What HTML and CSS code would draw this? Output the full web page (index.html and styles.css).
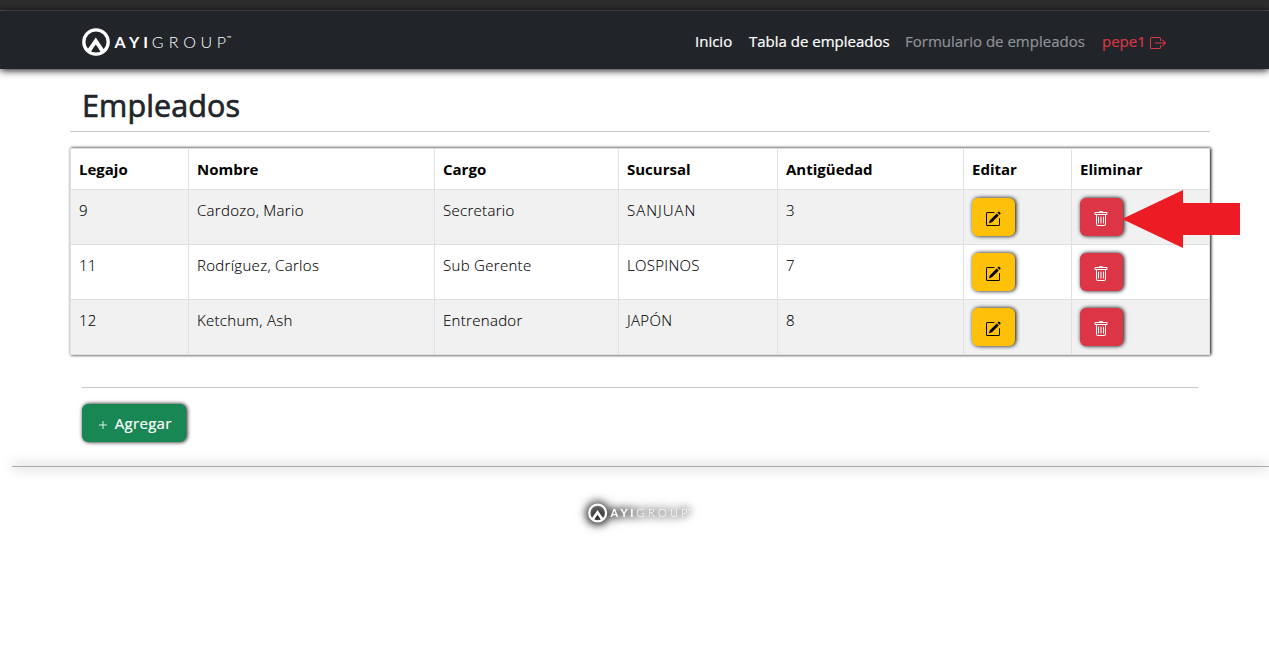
FILE: index.html
```html
<!DOCTYPE html>
<html lang="es">
<head>
<meta charset="utf-8">
<title>Empleados</title>
<link rel="stylesheet" href="styles.css">
</head>
<body>
<svg class="defs" width="0" height="0">
  <symbol id="edit" viewBox="0 0 16 16">
    <path d="M15.502 1.940a.5.5 0 0 1 0 .706L14.459 3.690l-2-2L13.502.646a.5.5 0 0 1 .707 0l1.293 1.293zm-1.750 2.456-2-2L4.939 9.210a.5.5 0 0 0-.121.196l-.805 2.414a.25.25 0 0 0 .316.316l2.414-.805a.5.5 0 0 0 .196-.120l6.813-6.814z"/>
    <path fill-rule="evenodd" d="M1 13.500A1.500 1.500 0 0 0 2.500 15h11a1.500 1.500 0 0 0 1.500-1.500v-6a.5.5 0 0 0-1 0v6a.5.5 0 0 1-.5.5h-11a.5.5 0 0 1-.5-.5v-11a.5.5 0 0 1 .5-.5H9a.5.5 0 0 0 0-1H2.500A1.500 1.500 0 0 0 1 2.500v11z"/>
  </symbol>
  <symbol id="trash" viewBox="0 0 16 16">
    <path d="M5.500 5.500A.5.5 0 0 1 6 6v6a.5.5 0 0 1-1 0V6a.5.5 0 0 1 .5-.5zm2.500 0a.5.5 0 0 1 .5.5v6a.5.5 0 0 1-1 0V6a.5.5 0 0 1 .5-.5zm3 .5a.5.5 0 0 0-1 0v6a.5.5 0 0 0 1 0V6z"/>
    <path fill-rule="evenodd" d="M14.500 3a1 1 0 0 1-1 1H13v9a2 2 0 0 1-2 2H5a2 2 0 0 1-2-2V4h-.5a1 1 0 0 1-1-1V2a1 1 0 0 1 1-1H6a1 1 0 0 1 1-1h2a1 1 0 0 1 1 1h3.500a1 1 0 0 1 1 1v1zM4.118 4 4 4.059V13a1 1 0 0 0 1 1h6a1 1 0 0 0 1-1V4.059L11.882 4H4.118zM2.500 3V2h11v1h-11z"/>
  </symbol>
</svg>
<div class="top-strip"></div>
<header class="navbar">
  <svg class="brand" width="152" height="28" viewBox="0 0 152 28">
    <circle cx="14" cy="14" r="12.200" fill="none" stroke="#fff" stroke-width="3.300"/>
    <path d="M4.600 22.800L13.800 9.600l9 13.200-3.200 2.600-3.200-5.200-2.600-3.600-2.700 3.600-3.300 5.200z" fill="#fff"/>
    <text class="logo-bold" x="32.600 47 61.300" y="19.500">AYI</text>
    <text class="logo-light" x="69.700 86.700 101.200 118.600 134.700" y="19.500">GROUP</text>
    <text class="logo-tm" x="144.500" y="12">™</text>
  </svg>
  <nav class="links">
    <a class="l-inicio">Inicio</a>
    <a class="l-tabla">Tabla de empleados</a>
    <a class="l-form">Formulario de empleados</a>
    <a class="l-user">pepe1</a>
    <svg class="exit" width="16" height="16" viewBox="0 0 16 16" fill="currentColor"><path fill-rule="evenodd" d="M10 12.500a.5.5 0 0 1-.5.5h-8a.5.5 0 0 1-.5-.5v-9a.5.5 0 0 1 .5-.5h8a.5.5 0 0 1 .5.5v2a.5.5 0 0 0 1 0v-2A1.500 1.500 0 0 0 9.500 2h-8A1.500 1.500 0 0 0 0 3.500v9A1.500 1.500 0 0 0 1.500 14h8a1.500 1.500 0 0 0 1.500-1.500v-2a.5.5 0 0 0-1 0v2z"/><path fill-rule="evenodd" d="M15.854 8.354a.5.5 0 0 0 0-.708l-3-3a.5.5 0 0 0-.708.708L14.293 7.500H5.500a.5.5 0 0 0 0 1h8.793l-2.147 2.146a.5.5 0 0 0 .708.708l3-3z"/></svg>
  </nav>
</header>
<main class="content">
  <h1>Empleados</h1>
  <table class="employees">
    <colgroup><col class="c1"><col class="c2"><col class="c3"><col class="c4"><col class="c5"><col class="c6"><col class="c7"></colgroup>
    <thead>
      <tr><th>Legajo</th><th>Nombre</th><th>Cargo</th><th>Sucursal</th><th>Antigüedad</th><th>Editar</th><th>Eliminar</th></tr>
    </thead>
    <tbody>
      <tr><td>9</td><td>Cardozo, Mario</td><td>Secretario</td><td class="upper">SANJUAN</td><td>3</td>
        <td><button class="btn warning"><svg width="16" height="16"><use href="#edit"/></svg></button></td>
        <td class="marked"><button class="btn danger"><svg width="16" height="16"><use href="#trash"/></svg></button>
          <svg class="arrow" width="119" height="58" viewBox="0 0 119 58"><path d="M0 29L61 0V13H118V45H61V58z" fill="#ed1c24"/></svg></td></tr>
      <tr><td>11</td><td>Rodríguez, Carlos</td><td>Sub Gerente</td><td>LOSPINOS</td><td>7</td>
        <td><button class="btn warning"><svg width="16" height="16"><use href="#edit"/></svg></button></td>
        <td><button class="btn danger"><svg width="16" height="16"><use href="#trash"/></svg></button></td></tr>
      <tr><td>12</td><td>Ketchum, Ash</td><td>Entrenador</td><td>JAPÓN</td><td>8</td>
        <td><button class="btn warning"><svg width="16" height="16"><use href="#edit"/></svg></button></td>
        <td><button class="btn danger"><svg width="16" height="16"><use href="#trash"/></svg></button></td></tr>
    </tbody>
  </table>
  <div class="actions">
    <button class="btn success"><svg width="10" height="10" viewBox="0 0 10 10"><path d="M5 1v8M1 5h8" stroke="#fff" stroke-opacity=".85" fill="none"/></svg><span>Agregar</span></button>
  </div>
</main>
<footer class="footer">
  <svg class="footer-logo" width="105" height="20" viewBox="0 0 152 28">
    <circle cx="14" cy="14" r="12.200" fill="none" stroke="#fff" stroke-width="3.300"/>
    <path d="M4.600 22.800L13.800 9.600l9 13.200-3.200 2.600-3.200-5.200-2.600-3.600-2.700 3.600-3.300 5.200z" fill="#fff"/>
    <text class="logo-bold" x="32.600 47 61.300" y="19.500">AYI</text>
    <text class="logo-light" x="69.700 86.700 101.200 118.600 134.700" y="19.500">GROUP</text>
    <text class="logo-tm" x="144.500" y="12">™</text>
  </svg>
</footer>
</body>
</html>
```
FILE: styles.css
```css
* { box-sizing: border-box; }
body {
  margin: 0;
  height: 646px;
  overflow: hidden;
  background: #fff;
  color: #212529;
  font: 15px/24px "Open Sans", "Noto Sans", sans-serif;
}
.defs { position: absolute; }
.logo-bold, .logo-light, .logo-tm { font-family: Lato, sans-serif; font-size: 16px; fill: #fff; }
.logo-bold { font-weight: 700; }
.logo-light { font-weight: 300; }
.logo-tm { font-size: 6px; }
.top-strip { height: 11px; background: #2d2d2d; border-bottom: 1px solid #5c5c5c; }
.navbar {
  height: 58px;
  display: flex;
  justify-content: space-between;
  padding: 0 103px 0 82px;
  background: #212529;
  box-shadow: 0 1px 8px #000;
}
.brand { margin-top: 17px; }
.links { display: flex; padding-top: 18px; color: #fff; white-space: nowrap; -webkit-text-stroke: .2px; }
.l-inicio { width: 54px; }
.l-tabla { width: 156px; }
.l-form { width: 197px; color: #909294; }
.l-user { width: 48px; color: #dc3545; }
.exit { color: #dc3545; margin-top: 6px; }
.content { width: 1140px; margin-left: 70px; }
h1 {
  height: 63px;
  margin: 0 0 16px;
  padding: 17px 12px 0;
  border-bottom: 1px solid #c7c8c9;
  font-size: 30.5px;
  line-height: 38px;
  font-weight: 500;
  letter-spacing: .1px;
  -webkit-text-stroke: .7px;
}
.employees {
  width: 1140px;
  table-layout: fixed;
  border-collapse: collapse;
  color: #000;
  box-shadow: 1px 0 3px #000;
}
.c1 { width: 118px; }
.c2 { width: 246px; }
.c3 { width: 184px; }
.c4 { width: 159px; }
.c5 { width: 186px; }
.c6 { width: 108px; }
th, td { border: 1px solid #dee2e6; text-align: left; vertical-align: top; padding: 8px; }
th { height: 41px; font-weight: 700; }
td { height: 55px; padding: 8px 8px 0; font-weight: 300; letter-spacing: .3px; -webkit-text-stroke: .1px; }
.upper { letter-spacing: 1px; }
td:nth-child(n+6) { padding: 8px 8px 0; }
tbody tr:nth-child(odd) { background: #f1f1f1; }
.btn {
  display: flex;
  align-items: center;
  justify-content: center;
  width: 43px;
  height: 38px;
  padding: 4px 1px 0 0;
  border: 0;
  border-radius: 6px;
  box-shadow: 1px 0 4px #000;
  font: inherit;
  color: #fff;
}
.btn svg { fill: currentColor; }
.warning { background: #ffc107; color: #000; }
.danger { background: #dc3545; }
.warning, .danger { width: 42.5px; padding-right: .5px; }
.marked { position: relative; }
.arrow { position: absolute; left: 50px; top: 0; }
.actions { margin: 32px 12px 0; padding-top: 16px; border-top: 1px solid #c7c8c9; }
.success { width: 103.5px; background: #198754; gap: 7px; padding: 0 0 0 2px; letter-spacing: .3px; -webkit-text-stroke: .2px; }
.success svg { margin-top: 4px; }
.footer {
  margin: 24px 0 0 12px;
  height: 180px;
  border-top: 1px solid #aaa;
  position: relative;
  display: flex;
  justify-content: center;
  padding-top: 36px;
}
.footer::before { content: ""; position: absolute; left: 0; right: 0; top: -1px; height: 1px; box-shadow: 0 0 12px rgba(0, 0, 0, .9); }
.footer-logo { overflow: visible; filter: drop-shadow(0 0 4px #000) drop-shadow(0 0 4px #000); }
```
